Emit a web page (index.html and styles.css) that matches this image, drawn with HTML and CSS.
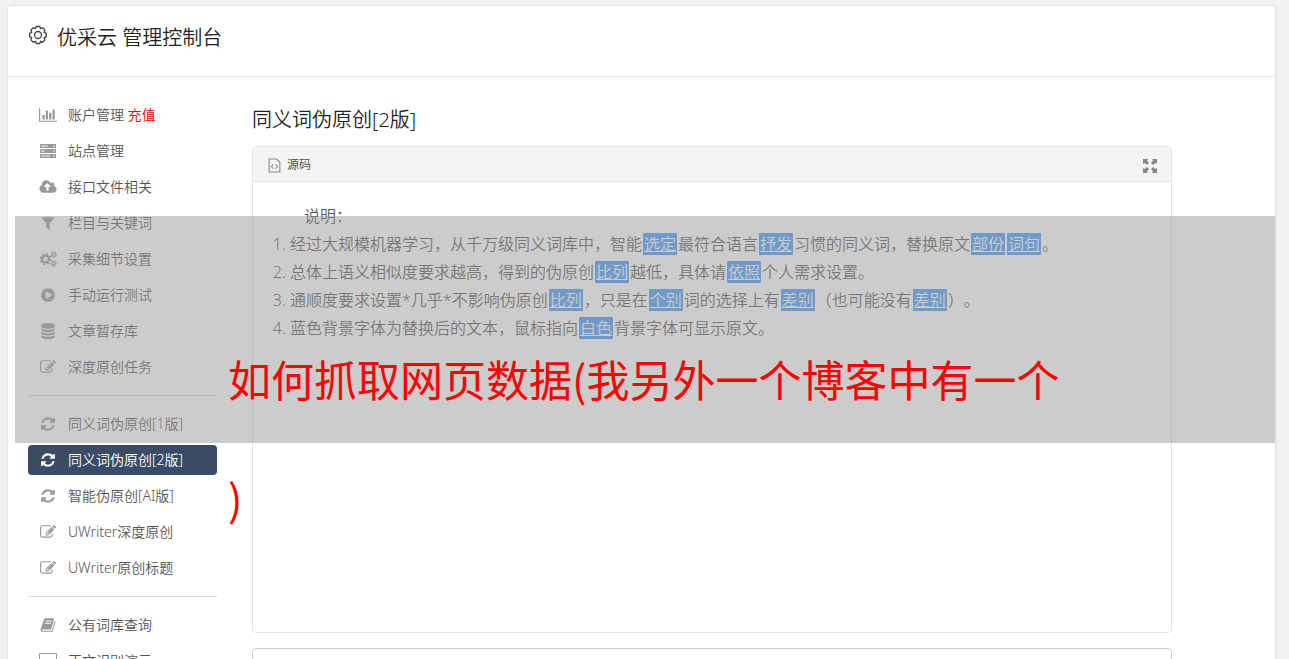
FILE: index.html
```html
<!DOCTYPE html>
<html lang="zh-CN">
<head>
    <meta charset="UTF-8">
    <meta name="viewport" content="width=device-width, initial-scale=1.0">
    <title>优采云 管理控制台</title>
    <link rel="stylesheet" href="styles.css">
</head>
<body>
    <svg class="sprite" aria-hidden="true">
        <symbol id="refresh" viewBox="0 0 1792 1792"><path d="M1639 1056q0 5-1 7-64 268-268 434.5t-478 166.5q-146 0-282.5-55t-243.5-157l-129 129q-19 19-45 19t-45-19-19-45v-448q0-26 19-45t45-19h448q26 0 45 19t19 45-19 45l-137 137q71 66 161 102t187 36q134 0 250-65t186-179q11-17 53-117 8-23 30-23h192q13 0 22.5 9.5t9.5 22.5zm25-800v448q0 26-19 45t-45 19h-448q-26 0-45-19t-19-45 19-45l138-138q-148-137-349-137-134 0-250 65t-186 179q-11 17-53 117-8 23-30 23h-199q-13 0-22.5-9.5t-9.5-22.5v-7q65-268 270-434.5t480-166.5q146 0 284 55.5t245 156.5l130-129q19-19 45-19t45 19 19 45z"/></symbol>
        <symbol id="edit" viewBox="0 0 1792 1792"><path d="M888 1184l116-116-152-152-116 116v56h96v96h56zm440-720q-16-16-33 1l-350 350q-17 17-1 33t33-1l350-350q17-17 1-33zm80 594v190q0 119-84.5 203.5t-203.5 84.5h-832q-119 0-203.5-84.5t-84.5-203.5v-832q0-119 84.5-203.5t203.5-84.5h832q63 0 117 25 15 7 18 23 3 17-9 29l-49 49q-14 14-32 8-23-6-45-6h-832q-66 0-113 47t-47 113v832q0 66 47 113t113 47h832q66 0 113-47t47-113v-126q0-13 9-22l64-64q15-15 35-7t20 29zm-96-738l288 288-672 672h-288v-288zm444 132l-92 92-288-288 92-92q28-28 68-28t68 28l152 152q28 28 28 68t-28 68z"/></symbol>
    </svg>

    <div class="panel">
        <header class="panel-header">
            <svg class="logo" viewBox="0 0 20 20"><path d="M8.3 1.5h3.4l.8 2 2.1-.7 2.3 2.3-.8 2.1 2.2 1.1v3.4l-2.2 1 .8 2.2-2.3 2.3-2.1-.8-.8 2.1H8.3l-.9-2.1-2.2.8-2.3-2.3.8-2.2-2.1-1V8.3l2.1-1.1-.8-2.1 2.3-2.3 2.2.7z"/><circle cx="10" cy="10" r="3.5"/></svg>
            <h1>优采云 管理控制台</h1>
        </header>

        <div class="panel-body">
            <nav class="sidebar">
                <a href="#"><svg class="icon" viewBox="0 0 2048 1792"><path d="M640 896v512h-256v-512h256zm384-512v1024h-256v-1024h256zm1024 1152v128h-2048v-1536h128v1408h1920zm-640-896v768h-256v-768h256zm384-384v1152h-256v-1152h256z"/></svg><span>账户管理 <em>充值</em></span></a>
                <a href="#"><svg class="icon" viewBox="0 0 18 16"><path fill-opacity=".55" d="M1 1h16v4H1zM1 6h16v4H1zM1 11h16v4H1z"/><path fill-rule="evenodd" d="M1 1h16v4H1zm1 1v2h7V2zm12 0v2h2V2zM1 6h16v4H1zm1 1v2h4V7zm12 0v2h2V7zM1 11h16v4H1zm1 1v2h9v-2zm12 0v2h2v-2z"/></svg><span>站点管理</span></a>
                <a href="#"><svg class="icon" viewBox="-64 0 1920 1792"><path d="M1216 864q0-14-9-23l-352-352q-9-9-23-9t-23 9l-351 351q-10 12-10 24 0 14 9 23t23 9h224v352q0 13 9.5 22.5t22.5 9.5h192q13 0 22.5-9.5t9.5-22.5v-352h224q13 0 22.5-9.5t9.5-22.5zm640 288q0 159-112.5 271.5t-271.5 112.5h-1088q-185 0-316.5-131.5t-131.5-316.5q0-130 70-240t188-165q-2-30-2-43 0-212 150-362t362-150q156 0 285.5 87t188.5 231q71-62 166-62 106 0 181 75t75 181q0 76-41 138 130 31 213.5 135.5t83.5 238.5z"/></svg><span>接口文件相关</span></a>
                <a href="#"><svg class="icon" viewBox="0 0 1792 1792"><path d="M1595 295q17 41-14 70l-493 493v742q0 42-39 59-13 5-25 5-27 0-45-19l-256-256q-19-19-19-45v-486l-493-493q-31-29-14-70 17-39 59-39h1280q42 0 59 39z"/></svg><span>栏目与关键词</span></a>
                <a href="#"><svg class="icon gears" viewBox="0 0 18 16"><circle class="ring" cx="6.5" cy="8" r="3.4"/><circle class="teeth" cx="6.5" cy="8" r="5.1"/><circle class="ring small" cx="14.5" cy="3.5" r="1.7"/><circle class="teeth small" cx="14.5" cy="3.5" r="2.7"/><circle class="ring small" cx="14.5" cy="12.5" r="1.7"/><circle class="teeth small" cx="14.5" cy="12.5" r="2.7"/></svg><span>采集细节设置</span></a>
                <a href="#"><svg class="icon" viewBox="0 0 1792 1792"><path d="M896 128q209 0 385.5 103t279.5 279.5 103 385.5-103 385.5-279.5 279.5-385.5 103-385.5-103-279.5-279.5-103-385.5 103-385.5 279.5-279.5 385.5-103zm384 823q32-18 32-55t-32-55l-544-320q-31-19-64-1-32 19-32 56v640q0 37 32 56 16 8 32 8 17 0 32-9z"/></svg><span>手动运行测试</span></a>
                <a href="#"><svg class="icon" viewBox="0 0 1792 1792"><path d="M896 768q237 0 443-43t325-127v170q0 69-103 128t-280 93.5-385 34.5-385-34.5-280-93.5-103-128v-170q119 84 325 127t443 43zm0 768q237 0 443-43t325-127v170q0 69-103 128t-280 93.5-385 34.5-385-34.5-280-93.5-103-128v-170q119 84 325 127t443 43zm0-384q237 0 443-43t325-127v170q0 69-103 128t-280 93.5-385 34.5-385-34.5-280-93.5-103-128v-170q119 84 325 127t443 43zm0-1152q208 0 385 34.5t280 93.5 103 128v128q0 69-103 128t-280 93.5-385 34.5-385-34.5-280-93.5-103-128v-128q0-69 103-128t280-93.5 385-34.5z"/></svg><span>文章暂存库</span></a>
                <a href="#"><svg class="icon"><use href="#edit"/></svg><span>深度原创任务</span></a>
                <hr>
                <a href="#"><svg class="icon"><use href="#refresh"/></svg><span>同义词伪原创[1版]</span></a>
                <a href="#" class="active"><svg class="icon"><use href="#refresh"/></svg><span>同义词伪原创[2版]</span></a>
                <a href="#"><svg class="icon"><use href="#refresh"/></svg><span>智能伪原创[AI版]</span></a>
                <a href="#"><svg class="icon"><use href="#edit"/></svg><span>UWriter深度原创</span></a>
                <a href="#"><svg class="icon"><use href="#edit"/></svg><span>UWriter原创标题</span></a>
                <hr>
                <a href="#"><svg class="icon" viewBox="0 0 1792 1792"><path d="M1703 478q40 57 18 129l-275 906q-19 64-76.5 107.5t-122.5 43.5h-923q-77 0-148.5-53.5t-99.5-131.5q-24-67-2-127 0-4 3-27t4-37q1-8-3-21.5t-3-19.5q2-11 8-21t16.5-23.5 16.5-23.5q23-38 45-91.5t30-91.5q3-10 .5-30t-.5-28q3-11 17-28t17-23q21-36 42-92t25-90q1-9-2.5-32t.5-28q4-13 22-30.5t22-22.5q19-26 42.5-84.5t27.5-96.5q1-8-3-25.5t-2-26.5q2-8 9-18t18-23 17-21q8-12 16.5-30.5t15-35 16-36 19.5-32 26.5-23.5 36-11.5 47.5 5.5l-1 3q38-9 51-9h761q74 0 114 56t18 130l-274 906q-36 119-71.5 153.5t-128.5 34.5h-869q-27 0-38 15-11 16-1 43 24 70 144 70h923q29 0 56-15.5t35-41.5l300-987q7-22 5-57 38 15 59 43zm-1064 2q-4 13 2 22.5t20 9.5h608q13 0 25.5-9.5t16.5-22.5l21-64q4-13-2-22.5t-20-9.5h-608q-13 0-25.5 9.5t-16.5 22.5zm-83 256q-4 13 2 22.5t20 9.5h608q13 0 25.5-9.5t16.5-22.5l21-64q4-13-2-22.5t-20-9.5h-608q-13 0-25.5 9.5t-16.5 22.5z"/></svg><span>公有词库查询</span></a>
                <a href="#"><svg class="icon" viewBox="0 0 18 16"><path fill-rule="evenodd" d="M1 0h16q1 0 1 1v11q0 1-1 1h-5l1 3H5l1-3H1q-1 0-1-1V1q0-1 1-1zm0 1v9h16V1z"/></svg><span>正文识别演示</span></a>
            </nav>

            <main class="content">
                <h2>同义词伪原创[2版]</h2>
                <div class="editor">
                    <div class="toolbar">
                        <button type="button" class="source"><svg viewBox="0 0 12 14"><path d="M1 1h7l3 3v9H1zM5 6L3 8l2 2M7 6l2 2-2 2"/></svg>源码</button>
                        <button type="button" class="expand" aria-label="全屏"><svg viewBox="0 0 14 14"><path d="M0 0h5L4 1.500l2 2.500-2 2-2.500-2L0 5zM14 0v5l-1.500-1L10 6 8 4l2-2.500L9 0zM0 14V9l1.500 1L4 8l2 2-2 2.500L5 14zM14 14H9l1-1.500L8 10l2-2 2.500 2L14 9z"/></svg></button>
                    </div>
                    <div class="editor-body">
                        <p>说明：</p>
                        <ol>
                            <li>经过大规模机器学习，从千万级同义词库中，智能<mark>选定</mark>最符合语言<mark>抒发</mark>习惯的同义词，替换原文<mark>部份</mark><mark>词句</mark>。</li>
                            <li>总体上语义相似度要求越高，得到的伪原创<mark>比列</mark>越低，具体请<mark>依照</mark>个人需求设置。</li>
                            <li>通顺度要求设置*几乎*不影响伪原创<mark>比列</mark>，只是在<mark>个别</mark>词的选择上有<mark>差别</mark>（也可能没有<mark>差别</mark>）。</li>
                            <li>蓝色背景字体为替换后的文本，鼠标指向<mark>白色</mark>背景字体可显示原文。</li>
                        </ol>
                    </div>
                </div>
                <div class="result"></div>
            </main>
        </div>
    </div>

    <div class="banner">如何抓取网页数据(我另外一个博客中有一个<br>)</div>
</body>
</html>
```
FILE: styles.css
```css
* {
    box-sizing: border-box;
}
body {
    margin: 0;
    height: 100vh;
    overflow: hidden;
    padding: 5px 12px 0 7px;
    background: #f1f1f1;
    font-family: "Noto Sans", "Noto Sans CJK SC", sans-serif;
    font-size: 14px;
    font-weight: 350;
    color: #555;
    text-spacing-trim: space-all;
}
.sprite {
    display: none;
}
.panel {
    background: #fff;
    border: 1px solid #e5e5e5;
    border-right-width: 2px;
    border-radius: 4px;
}
.panel-header {
    display: flex;
    align-items: center;
    gap: 9px;
    height: 71px;
    padding: 0 20px 10px;
    border-bottom: 1px solid #e5e5e5;
}
.logo {
    width: 20px;
    height: 20px;
    margin-bottom: 2px;
    fill: none;
    stroke: #444;
    stroke-width: 1.3;
}
h1, h2 {
    margin: 0;
    font-size: 20px;
    font-weight: 350;
    color: #222;
}
.panel-body {
    display: flex;
    gap: 35px;
    padding: 23px 103px 0 20px;
}

/* 左侧菜单 */
.sidebar {
    display: flex;
    flex-direction: column;
    gap: 6px;
    flex: 0 0 189px;
}
.sidebar a {
    display: flex;
    align-items: center;
    gap: 11px;
    height: 30px;
    padding-left: 11px;
    border-radius: 4px;
    color: #555;
    text-decoration: none;
    white-space: nowrap;
}
.sidebar span {
    padding-bottom: 2px;
}
.sidebar em {
    font-style: normal;
    color: #f00;
}
.sidebar hr {
    width: 100%;
    margin: 7px 0;
    border: 0;
    border-top: 1px solid #ddd;
}
.sidebar .active {
    background: #3a4b66;
    color: #fff;
}
.icon {
    width: 18px;
    height: 16px;
    fill: #999;
}
.active .icon {
    fill: #fff;
}
.gears circle {
    fill: none;
    stroke: #999;
    stroke-width: 2.4;
}
.gears .teeth {
    stroke-width: 1.8;
    stroke-dasharray: 2 2;
}
.gears .small {
    stroke-width: 1.2;
}
.gears .teeth.small {
    stroke-dasharray: 1 1;
}

/* 编辑器 */
.content {
    flex: 1;
    min-width: 0;
}
h2 {
    padding: 5px 0 11px;
    line-height: 30px;
}
.editor {
    border: 1px solid #e5e5e5;
    border-radius: 4px;
}
.toolbar {
    display: flex;
    justify-content: space-between;
    align-items: center;
    height: 35px;
    padding: 0 14px 0 15px;
    background: #f4f4f4;
    border-bottom: 1px solid #e5e5e5;
}
.toolbar button {
    display: flex;
    align-items: center;
    gap: 6px;
    padding: 0;
    border: 0;
    background: none;
    font: inherit;
    font-size: 12px;
    color: #444;
}
.toolbar svg {
    margin-top: 3px;
}
.source svg {
    width: 13px;
    height: 15px;
    fill: none;
    stroke: #888;
}
.expand svg {
    width: 14px;
    height: 14px;
    fill: #888;
}
.editor-body {
    min-height: 450px;
    padding: 20px 19px;
    font-size: 16px;
    line-height: 28px;
}
.editor-body p {
    margin: 0;
    text-indent: 2em;
}
.editor-body ol {
    margin: 0;
    padding-left: 18px;
}
mark {
    margin: 0 1px;
    padding: 0 1px;
    background: #459bf9;
    color: #fff;
    text-decoration: underline;
}
.result {
    height: 200px;
    margin-top: 15px;
    border: 1px solid #ccc;
    border-radius: 4px;
}

/* 标题横幅，盖在页面上面 */
.banner {
    position: absolute;
    top: 216px;
    left: 15px;
    right: 14px;
    height: 227px;
    padding: 103px 0 0 213px;
    background: rgba(153, 153, 153, 0.5);
    color: #f00;
    font-family: "Noto Sans CJK SC", sans-serif;
    font-size: 43px;
    font-weight: 400;
    line-height: 119px;
    white-space: nowrap;
}
```
